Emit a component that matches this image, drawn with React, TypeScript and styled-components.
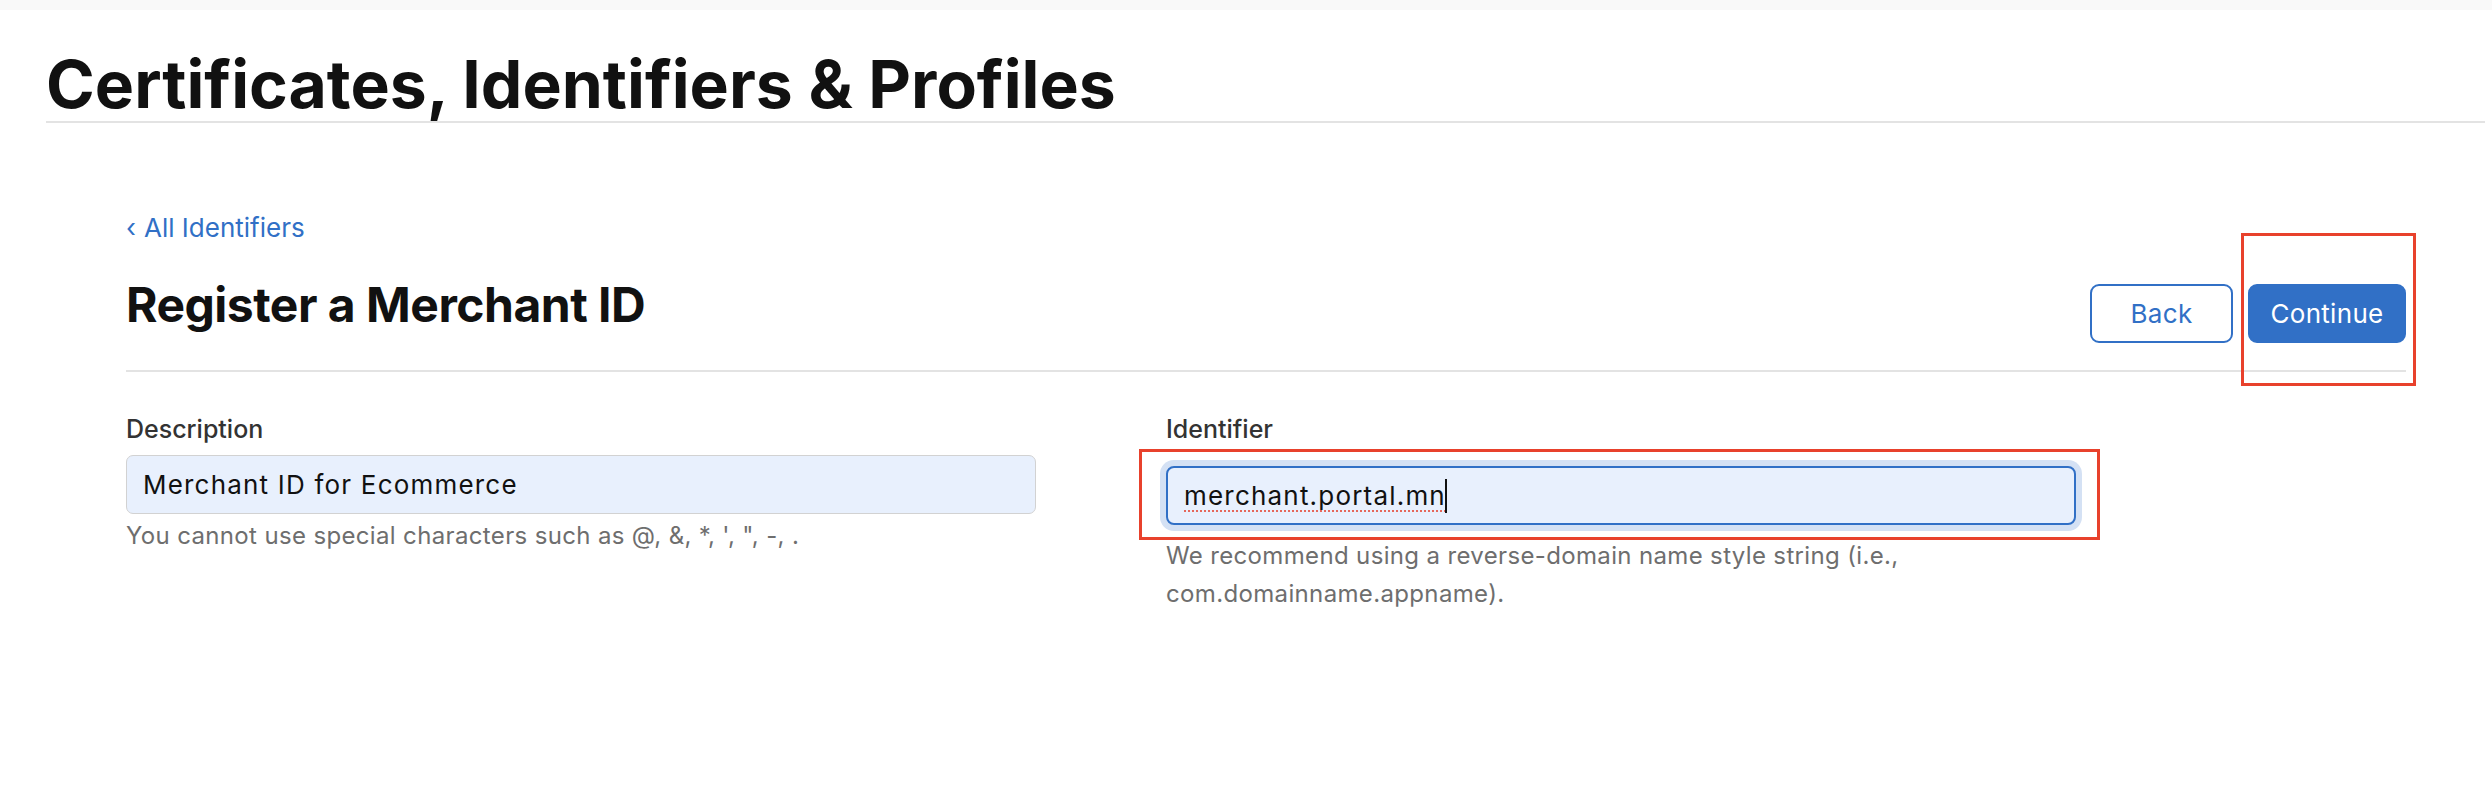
import React from "react";
import styled, { createGlobalStyle } from "styled-components";

const GlobalStyle = createGlobalStyle`
  html, body {
    margin: 0;
    padding: 0;
    background: #ffffff;
  }
  body {
    font-family: Inter, "Noto Sans", "Liberation Sans", sans-serif;
    color: #1d1d1f;
    -webkit-font-smoothing: antialiased;
  }
  *, *::before, *::after {
    box-sizing: border-box;
  }
`;

const Page = styled.div`
  width: 2492px;
  min-height: 792px;
  background: #ffffff;
`;

const TopStrip = styled.div`
  height: 10px;
  background: #f9f9f9;
`;

const MastHead = styled.header`
  margin: 41px 7px 0 46px;
  padding-bottom: 4px;
  border-bottom: 2px solid #e3e3e3;
`;

const PageTitle = styled.h1`
  margin: 0;
  font-size: 66px;
  line-height: 66px;
  font-weight: 700;
  letter-spacing: 0;
  color: #111111;
`;

const Content = styled.main`
  padding: 89px 86px 0 126px;
`;

const BackLink = styled.a`
  display: inline-flex;
  align-items: baseline;
  gap: 8px;
  font-size: 26px;
  line-height: 32px;
  color: #3170c6;
  text-decoration: none;
  cursor: pointer;
`;

const Chevron = styled.span`
  font-size: 26px;
`;

const HeadRow = styled.div`
  display: flex;
  justify-content: space-between;
  align-items: flex-start;
  margin-top: 32px;
  padding-bottom: 27px;
  border-bottom: 2px solid #e3e3e3;
`;

const SectionTitle = styled.h2`
  margin: 0;
  font-size: 48px;
  line-height: 58px;
  font-weight: 700;
  letter-spacing: -0.5px;
  color: #111111;
`;

const Actions = styled.div`
  display: flex;
  gap: 15px;
  margin-top: 8px;
`;

const Button = styled.button<{ $primary?: boolean; $width: number }>`
  width: ${(p) => p.$width}px;
  height: 59px;
  border-radius: 9px;
  border: 2px solid #3170c6;
  background: ${(p) => (p.$primary ? "#3170c6" : "#ffffff")};
  color: ${(p) => (p.$primary ? "#ffffff" : "#3170c6")};
  font-family: inherit;
  font-size: 26px;
  font-weight: 400;
  letter-spacing: 0.3px;
  padding: 0;
  cursor: pointer;
`;

const Annotated = styled.div`
  position: relative;
`;

const RedMark = styled.span<{ $t: number; $r: number; $b: number; $l: number }>`
  position: absolute;
  top: ${(p) => p.$t}px;
  right: ${(p) => p.$r}px;
  bottom: ${(p) => p.$b}px;
  left: ${(p) => p.$l}px;
  border: 3px solid #e8412c;
  pointer-events: none;
`;

const FormGrid = styled.div`
  display: grid;
  grid-template-columns: 910px 910px;
  column-gap: 130px;
  margin-top: 42px;
`;

const FieldColumn = styled.div`
  display: flex;
  flex-direction: column;
`;

const Label = styled.label`
  font-size: 25px;
  line-height: 30px;
  font-weight: 500;
  color: #333333;
`;

const FieldWrap = styled.div<{ $annotated?: boolean }>`
  margin-top: 11px;
  padding: ${(p) => (p.$annotated ? "11px 0 9px" : "0")};
`;

const Field = styled.div<{ $focused?: boolean }>`
  display: flex;
  align-items: center;
  height: 59px;
  padding: 0 16px;
  border-radius: ${(p) => (p.$focused ? "8px" : "7px")};
  border: ${(p) => (p.$focused ? "2px solid #3170c6" : "1.5px solid #d2d2d2")};
  background: #e8f0fd;
  box-shadow: ${(p) => (p.$focused ? "0 0 0 6px #d4e1f4" : "none")};
  font-size: 26px;
  letter-spacing: 1.2px;
  color: #111111;
  white-space: nowrap;
`;

const FieldValue = styled.span<{ $spell?: boolean }>`
  text-decoration: ${(p) => (p.$spell ? "underline dotted #e5675a" : "none")};
  text-decoration-thickness: 2px;
  text-underline-offset: 5px;
`;

const Caret = styled.span`
  display: inline-block;
  width: 2px;
  height: 34px;
  background: #111111;
  margin-left: -1px;
`;

const Help = styled.p`
  margin: 3px 0 0;
  font-size: 24px;
  line-height: 38px;
  letter-spacing: 0.35px;
  color: #6e6e6e;
`;

export default function App() {
  return (
    <Page>
      <GlobalStyle />
      <TopStrip />
      <MastHead>
        <PageTitle>Certificates, Identifiers &amp; Profiles</PageTitle>
      </MastHead>
      <Content>
        <BackLink>
          <Chevron>‹</Chevron>
          <span>All Identifiers</span>
        </BackLink>
        <HeadRow>
          <SectionTitle>Register a Merchant ID</SectionTitle>
          <Actions>
            <Button $width={143}>Back</Button>
            <Annotated>
              <Button $primary $width={158}>
                Continue
              </Button>
              <RedMark $t={-51} $r={-10} $b={-43} $l={-7} />
            </Annotated>
          </Actions>
        </HeadRow>
        <FormGrid>
          <FieldColumn>
            <Label>Description</Label>
            <FieldWrap>
              <Field>
                <FieldValue>Merchant ID for Ecommerce</FieldValue>
              </Field>
            </FieldWrap>
            <Help>You cannot use special characters such as @, &amp;, *, ', ", -, .</Help>
          </FieldColumn>
          <FieldColumn>
            <Label>Identifier</Label>
            <FieldWrap $annotated>
              <Annotated>
                <Field $focused>
                  <FieldValue $spell>merchant.portal.mn</FieldValue>
                  <Caret />
                </Field>
                <RedMark $t={-17} $r={-24} $b={-15} $l={-27} />
              </Annotated>
            </FieldWrap>
            <Help>
              We recommend using a reverse-domain name style string (i.e.,
              com.domainname.appname).
            </Help>
          </FieldColumn>
        </FormGrid>
      </Content>
    </Page>
  );
}
